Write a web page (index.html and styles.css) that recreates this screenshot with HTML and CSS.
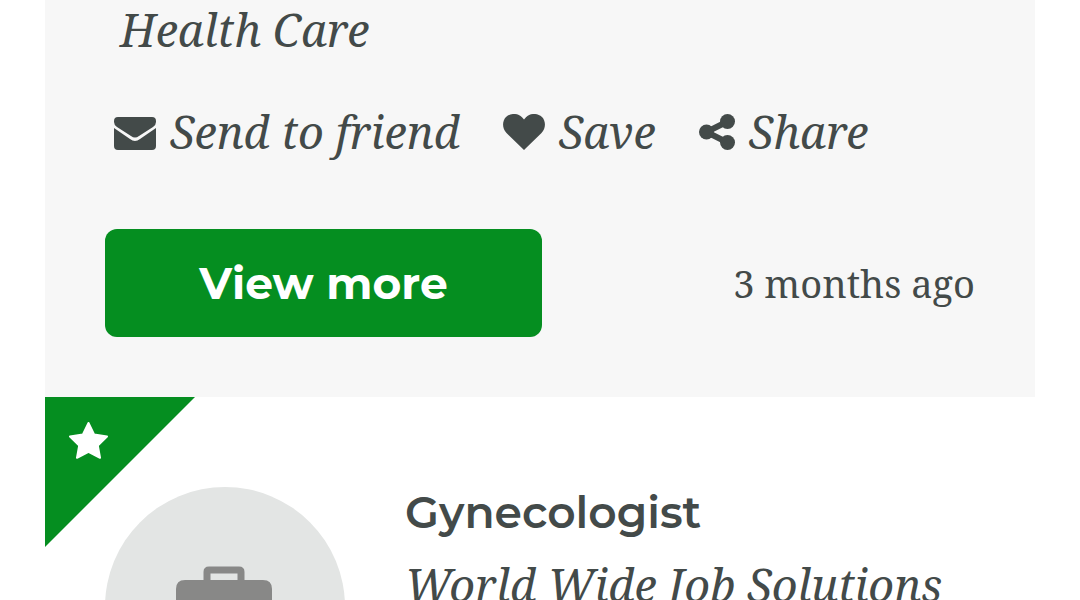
FILE: index.html
```html
<!DOCTYPE html>
<html lang="en">
	<head>
		<meta charset="utf-8">
		<meta name="viewport" content="width=device-width, initial-scale=1">
		<title>Jobs</title>
		<link rel="stylesheet" href="styles.css">
	</head>
	<body>
		<main class="job-list">
			<article class="job job-shaded">
				<p class="category">Health Care</p>
				<div class="actions">
					<a href="#">
						<svg width="42" height="36" viewBox="0 0 42 36">
							<path d="M4 3h34q4 0 4 4v1q0 3-3 5L25 22q-4 3-8 0L3 13Q0 11 0 8V7q0-4 4-4z"/>
							<path d="M0 14l16 11q5 4 10 0l16-11v18q0 4-4 4H4q-4 0-4-4z"/>
						</svg>
						Send to friend
					</a>
					<a href="#">
						<svg width="42" height="36" viewBox="0 0 42 36">
							<path d="M21 36L3.500 19C-1 14.500-1 7 3 3 7.500-1.200 15-1 19 3.200l2 2.200 2-2.200C27-1 34.500-1.200 39 3c4 4 4 11.500-.5 16z"/>
						</svg>
						Save
					</a>
					<a href="#">
						<svg width="36" height="36" viewBox="0 0 36 36">
							<path d="M28.500 7.500L7.500 18l21 10.500" fill="none" stroke="currentColor" stroke-width="6"/>
							<circle cx="28.500" cy="7.500" r="7.500"/>
							<circle cx="7.500" cy="18" r="7.500"/>
							<circle cx="28.500" cy="28.500" r="7.500"/>
						</svg>
						Share
					</a>
				</div>
				<div class="job-footer">
					<button type="button" class="view-more">View more</button>
					<time class="posted">3 months ago</time>
				</div>
			</article>

			<article class="job job-featured">
				<div class="ribbon">
					<svg width="40" height="38" viewBox="0 0 40 38">
						<path d="M19.500 2l5.700 11.600L38 15.500l-9.200 9 2.200 12.300-11.500-6L8 36.800l2.200-12.300-9.200-9 12.800-1.900z" stroke="currentColor" stroke-width="2" stroke-linejoin="round"/>
					</svg>
				</div>
				<div class="logo">
					<svg width="98" height="82" viewBox="0 0 98 82">
						<path d="M31 15V6q0-2 2-2h30q2 0 2 2v9" fill="none" stroke="currentColor" stroke-width="7"/>
						<path d="M9 14h78q9 0 9 9v23H0V23q0-9 9-9z"/>
						<path d="M0 51h36v6q0 3 3 3h18q3 0 3-3v-6h36v22q0 9-9 9H9q-9 0-9-9z"/>
					</svg>
				</div>
				<div class="job-info">
					<h2>Gynecologist</h2>
					<p class="company">World Wide Job Solutions</p>
				</div>
			</article>
		</main>
	</body>
</html>
```
FILE: styles.css
```css
* {
	box-sizing: border-box;
}

body {
	margin: 0;
	height: 100vh;
	overflow: hidden;
	background-color: #fff;
	color: #434a49;
	font-family: "Noto Serif", "DejaVu Serif", serif;
	font-size: 45px;
	line-height: 60px;
}

h2,
p {
	margin: 0;
}

svg {
	display: block;
	flex: none;
	fill: currentColor;
}

.job-list {
	padding: 0 45px;
}

.job {
	padding: 90px 60px 60px;
}

.job-shaded {
	background-color: #f7f7f7;
	padding-top: 0;
}

.category {
	padding-left: 15px;
	font-style: italic;
}

.actions {
	display: flex;
	gap: 43px;
	margin-top: 42px;
	padding-left: 9px;
	font-style: italic;
}

.actions a {
	display: flex;
	align-items: center;
	gap: 14px;
	color: inherit;
	text-decoration: none;
	white-space: nowrap;
}

.job-footer {
	display: flex;
	align-items: center;
	justify-content: space-between;
	margin-top: 67px;
}

.view-more {
	width: 60%;
	max-width: 437px;
	height: 108px;
	border: none;
	border-radius: 12px;
	background-color: #058e20;
	color: #fff;
	font-family: Montserrat, Inter, sans-serif;
	font-size: 44px;
	font-weight: 700;
	cursor: pointer;
}

.posted {
	font-size: 38px;
	line-height: 56px;
}

.job-featured {
	display: flex;
	gap: 60px;
	position: relative;
}

/* corner flag for featured jobs */
.ribbon {
	position: absolute;
	top: 0;
	left: 0;
	width: 150px;
	height: 150px;
	padding: 24px;
	background-color: #058e20;
	color: #fff;
	clip-path: polygon(0 0, 100% 0, 0 100%);
}

.logo {
	display: flex;
	flex: none;
	align-items: center;
	justify-content: center;
	width: 240px;
	height: 240px;
	border-radius: 50%;
	background-color: #e3e5e4;
	color: #888887;
}

h2 {
	font-family: Montserrat, Inter, sans-serif;
	font-size: 44px;
	font-weight: 600;
	line-height: 50px;
}

.company {
	margin-top: 18px;
	font-style: italic;
}
```
